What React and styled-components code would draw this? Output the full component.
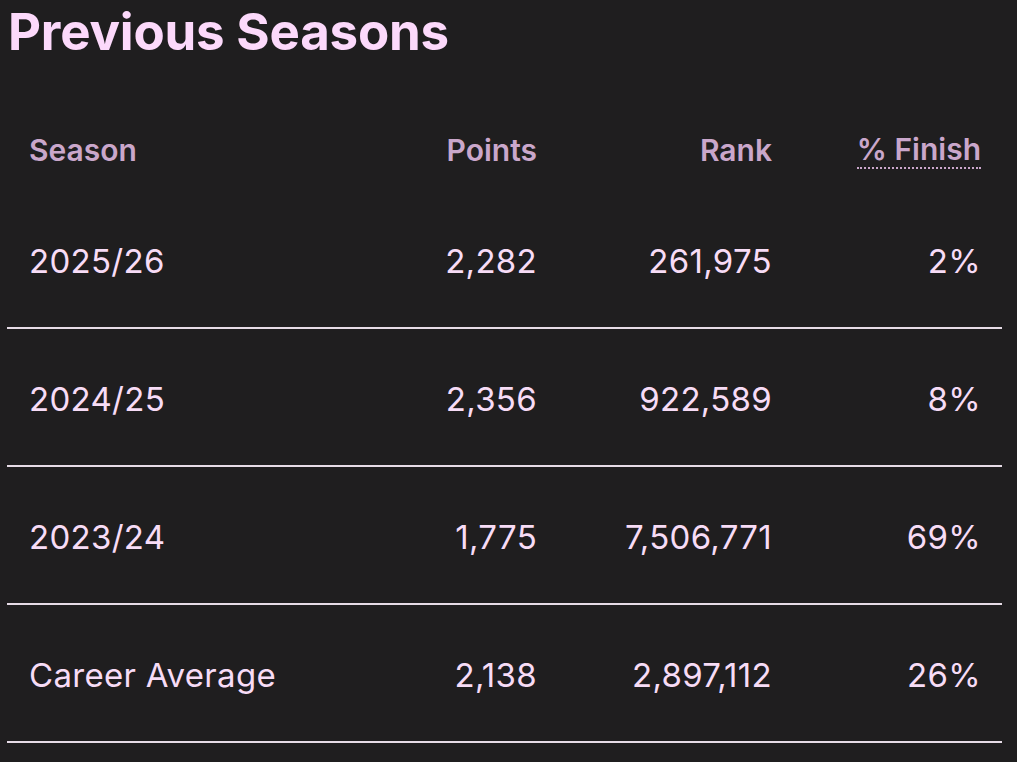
import React from 'react';
import styled, { createGlobalStyle } from 'styled-components';

const GlobalStyle = createGlobalStyle`
	html, body {
		margin: 0;
		padding: 0;
		background: #1f1e1f;
	}
	body {
		font-family: Inter, "Noto Sans", sans-serif;
		color: #f7dcf6;
	}
`;

const Page = styled.section`
	padding: 3px 15px 0 7px;
`;

const Title = styled.h2`
	margin: 0 0 0 1px;
	font-size: 51px;
	font-weight: 700;
	line-height: 58px;
	letter-spacing: -0.2px;
	color: #fcd9fb;
`;

const Table = styled.div`
	display: grid;
	grid-template-columns: 351px 200px 235px 209px;
	margin-top: 48px;
`;

const Cell = styled.div`
	display: flex;
	align-items: center;
	justify-content: ${p => (p.$right ? 'flex-end' : 'flex-start')};
	padding: ${p => (p.$head ? '0 21px 0 22px' : '3px 21px 0 22px')};
	box-sizing: border-box;
	height: ${p => (p.$head ? '82px' : '138px')};
	font-size: ${p => (p.$head ? '30px' : '33px')};
	font-weight: ${p => (p.$head ? 600 : 400)};
	letter-spacing: ${p => (p.$head ? '0' : '0.3px')};
	white-space: nowrap;
	color: ${p => (p.$head ? '#caa7cb' : '#f7dcf6')};
	border-bottom: ${p => (p.$head ? 'none' : '2px solid #e6dbe6')};
`;

const Abbr = styled.span`
	display: inline-block;
	border-bottom: 2px dotted #caa7cb;
	line-height: 36px;
	cursor: help;
`;

const seasons = [
	{ season: '2025/26', points: '2,282', rank: '261,975', finish: '2%' },
	{ season: '2024/25', points: '2,356', rank: '922,589', finish: '8%' },
	{ season: '2023/24', points: '1,775', rank: '7,506,771', finish: '69%' },
	{ season: 'Career Average', points: '2,138', rank: '2,897,112', finish: '26%' },
];

function App() {
	return (
		<Page>
			<GlobalStyle />
			<Title>Previous Seasons</Title>
			<Table>
				<Cell $head>Season</Cell>
				<Cell $head $right>Points</Cell>
				<Cell $head $right>Rank</Cell>
				<Cell $head $right>
					<Abbr title='Percentage finish'>% Finish</Abbr>
				</Cell>
				{seasons.map(row => (
					<React.Fragment key={row.season}>
						<Cell>{row.season}</Cell>
						<Cell $right>{row.points}</Cell>
						<Cell $right>{row.rank}</Cell>
						<Cell $right>{row.finish}</Cell>
					</React.Fragment>
				))}
			</Table>
		</Page>
	);
}

export default App;
